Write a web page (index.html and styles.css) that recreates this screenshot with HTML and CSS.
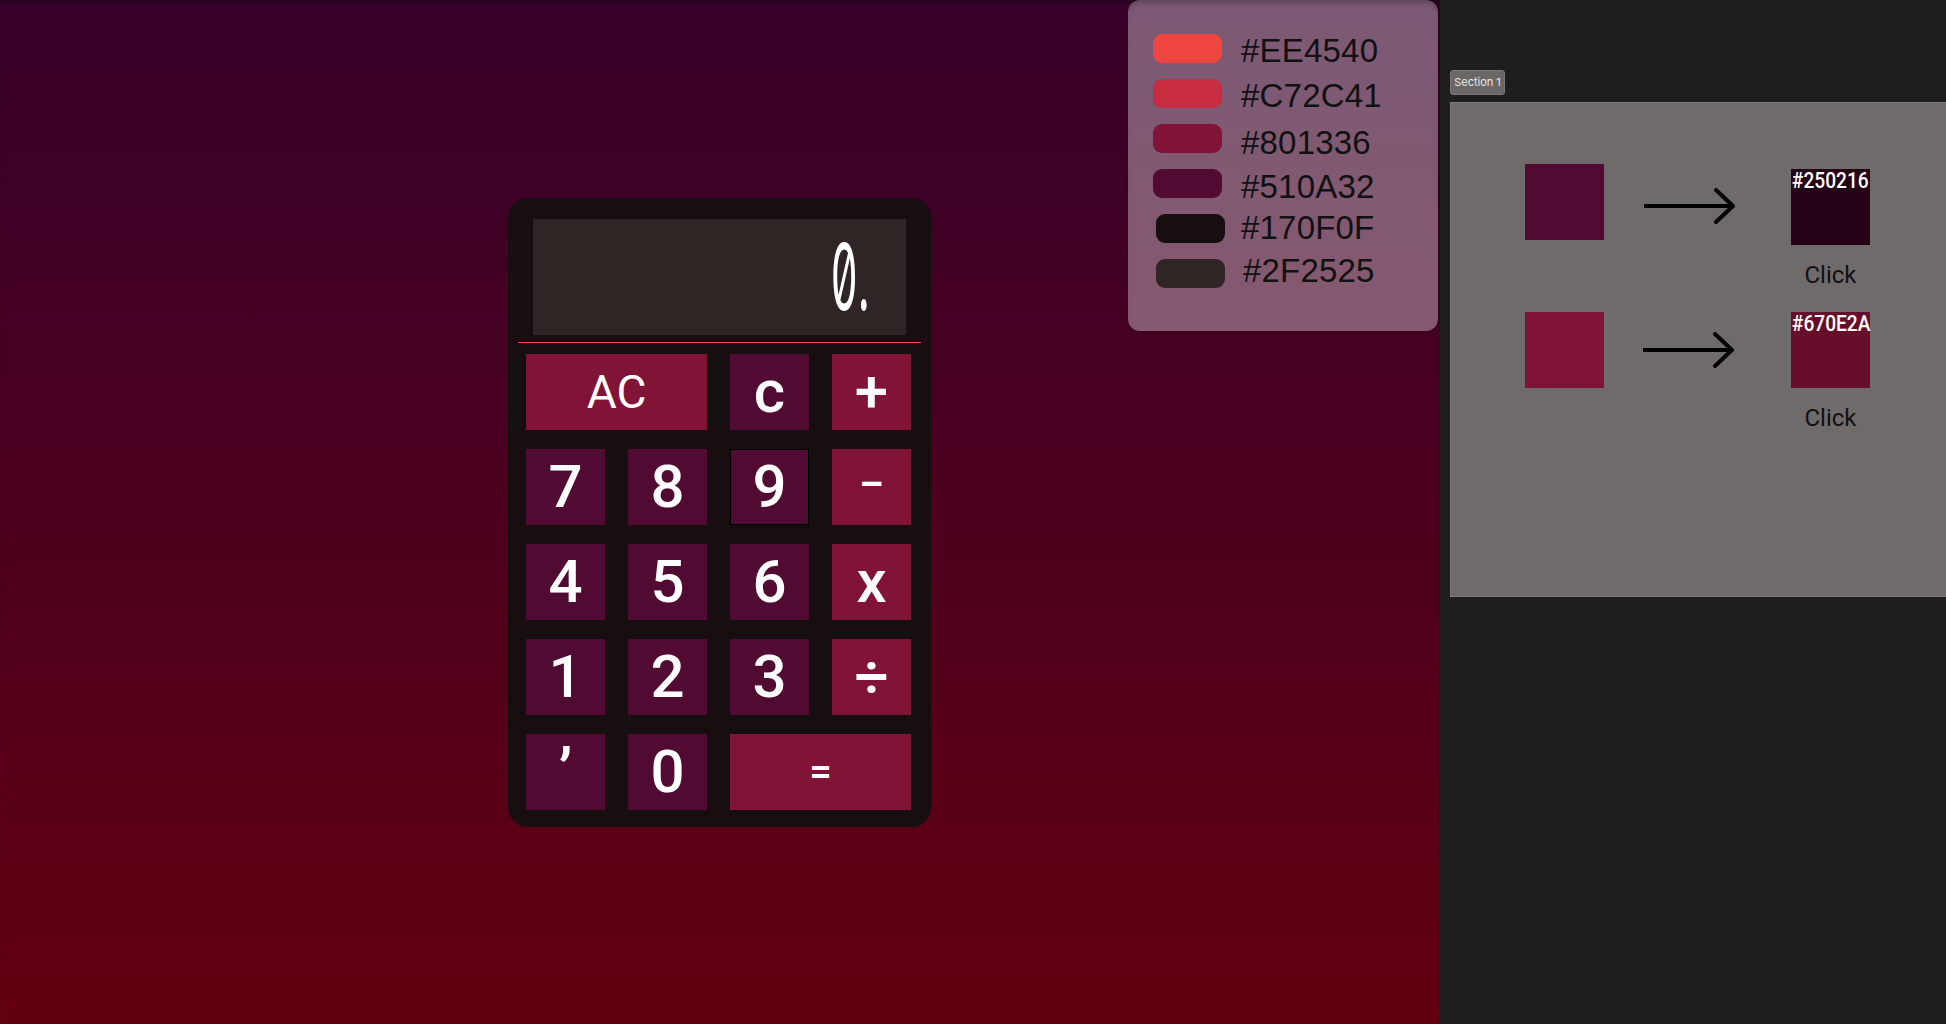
FILE: index.html
```html
<!DOCTYPE html>
<html lang="en">
<head>
<meta charset="utf-8">
<title>Calculator</title>
<link rel="stylesheet" href="styles.css">
</head>
<body>
<main class="stage">
  <section class="calc">
    <div class="screen"><span class="screen-text">0.</span></div>
    <div class="rule"></div>
    <div class="keys">
      <button class="key op wide key-ac">AC</button>
      <button class="key num">c</button>
      <button class="key op">+</button>
      <button class="key num">7</button>
      <button class="key num">8</button>
      <button class="key num key-outlined">9</button>
      <button class="key op key-minus">−</button>
      <button class="key num">4</button>
      <button class="key num">5</button>
      <button class="key num">6</button>
      <button class="key op">x</button>
      <button class="key num">1</button>
      <button class="key num">2</button>
      <button class="key num">3</button>
      <button class="key op">÷</button>
      <button class="key num key-comma">’</button>
      <button class="key num">0</button>
      <button class="key op wide key-eq">=</button>
    </div>
  </section>

  <aside class="palette">
    <div class="swatch-row"><span class="swatch c1"></span><span class="hex t-d1">#EE4540</span></div>
    <div class="swatch-row"><span class="swatch c2"></span><span class="hex t-d1">#C72C41</span></div>
    <div class="swatch-row"><span class="swatch c3"></span><span class="hex t-d3">#801336</span></div>
    <div class="swatch-row"><span class="swatch c4"></span><span class="hex t-d2">#510A32</span></div>
    <div class="swatch-row shifted"><span class="swatch c5"></span><span class="hex t-u2">#170F0F</span></div>
    <div class="swatch-row shifted"><span class="swatch c6"></span><span class="hex hex-last t-u3">#2F2525</span></div>
  </aside>
</main>

<section class="side">
  <div class="tab">Section 1</div>
  <div class="frame">
    <div class="demo-row first">
      <div class="sq sq-a"></div>
      <svg class="arrow" width="94" height="37" viewBox="0 0 94 37">
        <line x1="1" y1="18" x2="90" y2="18" stroke="#000" stroke-width="4"/>
        <polyline points="73,2 90,18 73,34" fill="none" stroke="#000" stroke-width="4" stroke-linecap="round" stroke-linejoin="round"/>
      </svg>
      <div class="result">
        <div class="sq sq-c"><span class="sq-label">#250216</span></div>
        <div class="click">Click</div>
      </div>
    </div>
    <div class="demo-row second">
      <div class="sq sq-b"></div>
      <svg class="arrow" width="94" height="37" viewBox="0 0 94 37">
        <line x1="0" y1="18" x2="89" y2="18" stroke="#000" stroke-width="4"/>
        <polyline points="72,2 89,18 72,34" fill="none" stroke="#000" stroke-width="4" stroke-linecap="round" stroke-linejoin="round"/>
      </svg>
      <div class="result">
        <div class="sq sq-d"><span class="sq-label">#670E2A</span></div>
        <div class="click">Click</div>
      </div>
    </div>
  </div>
</section>
</body>
</html>
```

FILE: styles.css
```css
* { box-sizing: border-box; }

html, body {
  margin: 0;
  padding: 0;
}

body {
  width: 1946px;
  height: 1024px;
  overflow: hidden;
  display: flex;
  background: #1e1e1e;
  font-family: Roboto, "Noto Sans", sans-serif;
}

/* ---------- left stage ---------- */
.stage {
  width: 1440px;
  height: 1024px;
  flex: none;
  display: flex;
  align-items: flex-start;
  padding-left: 508px;
  background: linear-gradient(180deg, #36002a 0%, #4d001e 50%, #630010 100%);
  box-shadow: inset 0 5px 5px -3px rgba(0, 0, 0, 0.35);
}

.calc {
  margin-top: 198px;
  width: 423px;
  height: 629px;
  border-radius: 20px;
  background: #170f0f;
  padding-top: 21px;
}

.screen {
  margin: 0 25px;
  height: 116px;
  background: #2f2525;
  display: flex;
  justify-content: flex-end;
  align-items: center;
  padding-right: 37px;
}

.screen-text {
  font-family: Inter, sans-serif;
  font-weight: 400;
  font-size: 92px;
  line-height: 1;
  color: #ffffff;
  font-feature-settings: "zero" 1, "tnum" 1;
  transform: scaleX(0.46);
  transform-origin: right center;
  white-space: nowrap;
}

.rule {
  margin: 7px 10px 0;
  height: 1px;
  background: #ee4540;
}

.keys {
  margin: 11px 0 0 18px;
  display: grid;
  grid-template-columns: repeat(4, 79px);
  grid-auto-rows: 76px;
  column-gap: 23px;
  row-gap: 19px;
}

.key {
  border: none;
  margin: 0;
  padding: 0;
  color: #ffffff;
  font-family: Roboto, sans-serif;
  font-weight: 500;
  font-size: 60px;
  line-height: 1;
  display: flex;
  align-items: center;
  justify-content: center;
}

.key.num { background: #510a32; }
.key.op { background: #801336; }
.key.wide { grid-column: span 2; }

.key-ac { font-size: 46px; font-weight: 400; }
.key-eq { font-size: 40px; }
.key-minus { font-size: 46px; padding-bottom: 6px; }
.key-outlined { box-shadow: inset 0 0 0 1px #000; }
.key-comma { font-size: 64px; padding-top: 4px; }

/* ---------- palette card ---------- */
.palette {
  margin-left: 197px;
  width: 310px;
  height: 331px;
  border-radius: 12px;
  background: rgba(255, 255, 255, 0.35);
  box-shadow: inset 0 6px 6px -4px rgba(0, 0, 0, 0.25), 1px 0 3px rgba(0, 0, 0, 0.35);
  padding: 34px 0 0 25px;
  display: flex;
  flex-direction: column;
  gap: 16px;
}

.swatch-row {
  display: flex;
  align-items: center;
  height: 29px;
  gap: 19px;
}

.swatch-row.shifted {
  padding-left: 3px;
  gap: 16px;
}

.swatch {
  width: 69px;
  height: 29px;
  border-radius: 9px;
  flex: none;
}

.c1 { background: #ee4540; }
.c2 { background: #c72c41; }
.c3 { background: #801336; }
.c4 { background: #510a32; }
.c5 { background: #170f0f; }
.c6 { background: #2f2525; }

.hex {
  font-family: "Liberation Sans", Arial, sans-serif;
  font-size: 33px;
  line-height: 1;
  color: #111111;
  letter-spacing: 0.2px;
}

.t-d1 { margin-top: 3px; }
.t-d2 { margin-top: 5px; }
.t-d3 { margin-top: 7px; }
.t-u2 { margin-bottom: 3px; }
.t-u3 { margin-bottom: 7px; }

.hex-last { margin-left: 2px; }

/* ---------- right side ---------- */
.side {
  flex: 1;
  height: 1024px;
  overflow: hidden;
  padding: 70px 0 0 10px;
  background: #1e1e1e;
}

.tab {
  width: 55px;
  height: 25px;
  border: 1px solid #7c7878;
  border-radius: 3px;
  background: #6c6767;
  color: #e8e8e8;
  font-family: Inter, sans-serif;
  font-size: 11px;
  line-height: 23px;
  text-align: center;
}

.frame {
  margin-top: 7px;
  width: 520px;
  height: 495px;
  border: 1px solid #7e7a7a;
  background: #706b6b;
  padding: 61px 0 0 74px;
}

.demo-row {
  display: flex;
  align-items: flex-start;
}

.demo-row.second { margin-top: 23px; }

.sq {
  width: 79px;
  height: 76px;
  flex: none;
}

.sq-a { background: #510a32; }
.sq-b { background: #801336; }

.arrow {
  flex: none;
  margin-left: 39px;
  margin-top: 24px;
  display: block;
}

.demo-row.second .arrow { margin-top: 20px; }

.result {
  margin-left: 54px;
  width: 79px;
  display: flex;
  flex-direction: column;
  align-items: center;
}

.demo-row.first .result { padding-top: 5px; }

.sq-c { background: #250216; }
.sq-d { background: #670e2a; }

.sq-label {
  display: block;
  font-family: Roboto, sans-serif;
  font-weight: 500;
  font-size: 22px;
  line-height: 24px;
  color: #ffffff;
  padding-left: 1px;
  white-space: nowrap;
  transform: scaleX(0.87);
  transform-origin: left center;
}

.click {
  margin-top: 16px;
  font-family: Roboto, sans-serif;
  font-weight: 400;
  font-size: 24px;
  line-height: 28px;
  color: #111111;
  white-space: nowrap;
}
```
